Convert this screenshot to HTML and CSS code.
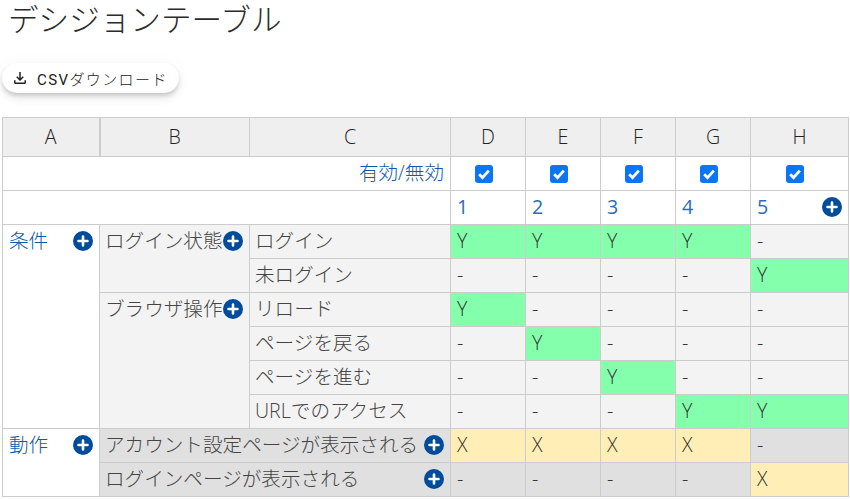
FILE: index.html
```html
<!DOCTYPE html>
<html lang="ja">
<head>
<meta charset="utf-8">
<title>デシジョンテーブル</title>
<link rel="stylesheet" href="styles.css">
</head>
<body>
<svg class="defs" width="0" height="0" aria-hidden="true">
  <symbol id="plus" viewBox="0 0 20 20">
    <circle cx="10" cy="10" r="10" fill="#004c9b"/>
    <path d="M10 5.500v9M5.500 10h9" stroke="#fff" stroke-width="2.600" stroke-linecap="round"/>
  </symbol>
</svg>
<h1 class="title">デシジョンテーブル</h1>
<button class="csv" type="button">
  <svg class="csv-icon" viewBox="0 0 24 24" aria-hidden="true"><path fill="currentColor" d="M18 15v3H6v-3H4v3c0 1.100.9 2 2 2h12c1.100 0 2-.9 2-2v-3h-2zm-1-4-1.410-1.410L13 12.170V4h-2v8.170L8.410 9.590 7 11l5 5 5-5z"/></svg>
  <span><span class="csv-latin">CSV</span>ダウンロード</span>
</button>
<table class="dt">
  <colgroup>
    <col class="c-a"><col class="c-b"><col class="c-c"><col class="c-r"><col class="c-r"><col class="c-r"><col class="c-r"><col class="c-h">
  </colgroup>
  <thead>
    <tr class="head">
      <th class="th-a">A</th><th>B</th><th>C</th><th>D</th><th>E</th><th>F</th><th>G</th><th>H</th>
    </tr>
  </thead>
  <tbody>
    <tr>
      <td colspan="3" class="enable link">有効/無効</td>
      <td class="chk"><input type="checkbox" checked></td>
      <td class="chk"><input type="checkbox" checked></td>
      <td class="chk"><input type="checkbox" checked></td>
      <td class="chk"><input type="checkbox" checked></td>
      <td class="chk"><input type="checkbox" checked></td>
    </tr>
    <tr>
      <td colspan="3"></td>
      <td class="link num">1</td><td class="link num">2</td><td class="link num">3</td><td class="link num">4</td>
      <td class="link num"><div class="split">5<svg class="plus"><use href="#plus"/></svg></div></td>
    </tr>
    <tr>
      <td rowspan="6" class="link"><div class="split">条件<svg class="plus"><use href="#plus"/></svg></div></td>
      <td rowspan="2" class="grey lab"><div class="split">ログイン状態<svg class="plus"><use href="#plus"/></svg></div></td>
      <td class="grey lab">ログイン</td>
      <td class="y">Y</td><td class="y">Y</td><td class="y">Y</td><td class="y">Y</td><td class="grey">-</td>
    </tr>
    <tr>
      <td class="grey lab">未ログイン</td>
      <td class="grey">-</td><td class="grey">-</td><td class="grey">-</td><td class="grey">-</td><td class="y">Y</td>
    </tr>
    <tr>
      <td rowspan="4" class="grey lab"><div class="split">ブラウザ操作<svg class="plus"><use href="#plus"/></svg></div></td>
      <td class="grey lab">リロード</td>
      <td class="y">Y</td><td class="grey">-</td><td class="grey">-</td><td class="grey">-</td><td class="grey">-</td>
    </tr>
    <tr>
      <td class="grey lab">ページを戻る</td>
      <td class="grey">-</td><td class="y">Y</td><td class="grey">-</td><td class="grey">-</td><td class="grey">-</td>
    </tr>
    <tr>
      <td class="grey lab">ページを進む</td>
      <td class="grey">-</td><td class="grey">-</td><td class="y">Y</td><td class="grey">-</td><td class="grey">-</td>
    </tr>
    <tr>
      <td class="grey lab">URLでのアクセス</td>
      <td class="grey">-</td><td class="grey">-</td><td class="grey">-</td><td class="y">Y</td><td class="y">Y</td>
    </tr>
    <tr>
      <td rowspan="2" class="link"><div class="split">動作<svg class="plus"><use href="#plus"/></svg></div></td>
      <td colspan="2" class="act lab"><div class="split">アカウント設定ページが表示される<svg class="plus"><use href="#plus"/></svg></div></td>
      <td class="x">X</td><td class="x">X</td><td class="x">X</td><td class="x">X</td><td class="act">-</td>
    </tr>
    <tr>
      <td colspan="2" class="act lab"><div class="split">ログインページが表示される<svg class="plus"><use href="#plus"/></svg></div></td>
      <td class="act">-</td><td class="act">-</td><td class="act">-</td><td class="act">-</td><td class="x">X</td>
    </tr>
  </tbody>
</table>
</body>
</html>
```

FILE: styles.css
```css
* { box-sizing: border-box; }
html, body { margin: 0; padding: 0; background: #fff; }
body {
  width: 850px;
  height: 499px;
  overflow: hidden;
  padding: 0 2px;
  font-family: "Open Sans", "Noto Sans CJK JP", sans-serif;
  color: #333;
}
.defs { position: absolute; }
.title {
  margin: 0;
  padding: 1px 0 0 6px;
  height: 63px;
  font-family: Roboto, "Noto Sans CJK JP", sans-serif;
  font-weight: 300;
  font-size: 30.600px;
  line-height: 40px;
  color: #2b2b2b;
}
.csv {
  display: flex;
  align-items: center;
  gap: 8px;
  width: 177px;
  height: 30px;
  padding: 0 0 0 9px;
  border: 0;
  border-radius: 15px;
  background: #fff;
  box-shadow: 0 3px 5px -1px rgba(0,0,0,.2), 0 6px 10px 0 rgba(0,0,0,.06), 0 1px 18px 0 rgba(0,0,0,.04);
  font-family: Roboto, "Noto Sans CJK JP", sans-serif;
  font-size: 15px;
  font-weight: 300;
  letter-spacing: 1.400px;
  color: #222;
}
.csv-latin { font-weight: 400; }
.csv-icon { width: 18px; height: 18px; flex: none; }
.dt {
  margin-top: 24px;
  table-layout: fixed;
  border-collapse: collapse;
  width: 846px;
  font-size: 19.600px;
  line-height: 26px;
}
.c-a { width: 97px; }
.c-b { width: 150px; }
.c-c { width: 201px; }
.c-r { width: 75px; }
.c-h { width: 98px; }
.dt th, .dt td {
  border: 1px solid #ccc;
  height: 34px;
  padding: 3px 6px 3px 6px;
  vertical-align: top;
  text-align: left;
  font-weight: 300;
  overflow: hidden;
  white-space: nowrap;
}
.dt th {
  height: 39px;
  padding-top: 6px;
  text-align: center;
  background: #efefef;
  color: #222;
}
.dt .th-a { border-right: 2px solid #ccc; }
.link { color: #1159a8; }
.dt .num { font-weight: 400; color: #2a6db5; }
.dt .enable { text-align: right; }
.dt .chk { text-align: center; padding: 0 9px 0 0; vertical-align: middle; }
.chk input {
  appearance: none;
  display: block;
  margin: 0 auto;
  width: 18px;
  height: 18px;
  border-radius: 3px;
  background: #0a76f6 url("data:image/svg+xml,%3Csvg xmlns='http://www.w3.org/2000/svg' viewBox='0 0 18 18'%3E%3Cpath d='M4.200 9.300l3.300 3.300 6.300-7' fill='none' stroke='%23fff' stroke-width='2.800'/%3E%3C/svg%3E") center / 18px 18px no-repeat;
}
.dt .lab { padding-left: 5px; color: #444; }
.grey { background: #f3f3f3; }
.y { background: #84ffab; }
.x { background: #ffeeb5; }
.act { background: #e0e0e0; }
.split { display: flex; justify-content: space-between; align-items: center; }
.plus { width: 20px; height: 20px; flex: none; }
```
